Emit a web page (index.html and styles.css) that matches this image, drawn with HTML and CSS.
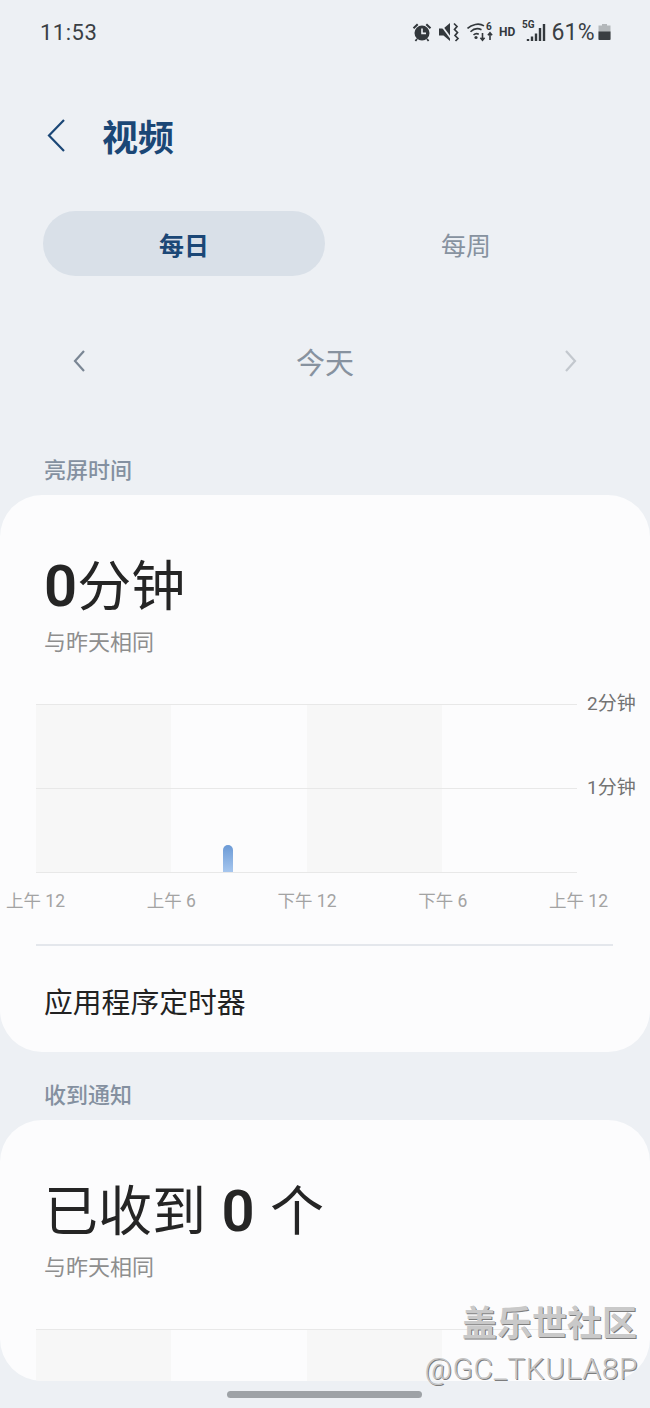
FILE: index.html
```html
<!DOCTYPE html>
<html lang="zh-CN">
<head>
<meta charset="utf-8">
<title>视频</title>
<link rel="stylesheet" href="styles.css">
</head>
<body>
<div class="screen">
  <header class="status">
    <span class="clock">11:53</span>
    <div class="status-icons">
      <svg class="ic" width="20" height="20" viewBox="0 0 20 20"><circle cx="10" cy="11" r="7.500" fill="#33383c"/><path d="M0.800 5.600 5 1.600 6.400 3 2.200 7zM19.200 5.600 15 1.600 13.600 3 17.800 7z" fill="#33383c"/><path d="M10 6.500v4.900h4" fill="none" stroke="#edf0f4" stroke-width="1.600"/><path d="M5 17l-1.600 2M15 17l1.600 2" stroke="#33383c" stroke-width="1.800"/></svg>
      <svg class="ic ic-mute" width="21" height="20" viewBox="0 0 21 20"><path d="M0 6.500h4.500L11 1v18l-6.500-5.500H0z" fill="#33383c"/><path d="M1 1.500l12.500 17" stroke="#edf0f4" stroke-width="1.700"/><path d="M15 1.500l3 3-2.500 3 3 3-2.500 3 3 3-2.500 2.500" fill="none" stroke="#33383c" stroke-width="1.700"/></svg>
      <svg class="ic ic-wifi" width="27" height="22" viewBox="0 0 27 22"><g fill="none" stroke="#33383c" stroke-width="1.600"><path d="M0.500 7.500C4.400 3.400 12 1.600 17 4.800"/><path d="M3.500 10.800C6.600 7.800 11 7 14.500 8.800"/><path d="M6.500 14C8 12.600 10 12.400 11.800 13.200"/><path d="M15.500 12v7M13.400 16.800l2.100 2.400 2.100-2.400M23 19v-7M20.900 14.200l2.100-2.400 2.100 2.400"/></g><circle cx="9" cy="16.500" r="1.600" fill="#33383c"/><text x="19" y="9" class="tiny">6</text></svg>
      <span class="hd">HD</span>
      <svg class="ic ic-signal" width="24" height="24" viewBox="0 0 24 24"><text x="0" y="8" class="tiny">5G</text><path d="M6 21v-2M10 21v-4.500M14 21v-7.500M18 21V8M22 21V4" stroke="#33383c" stroke-width="2.400" fill="none"/></svg>
      <span class="pct">61%</span>
      <svg class="ic" width="13" height="20" viewBox="0 0 13 20"><path d="M4 2h5v1.500h3.500V18H.5V3.500H4z" fill="#b3b7ba"/><path d="M.5 9.500h12V17a1 1 0 0 1-1 1h-10a1 1 0 0 1-1-1z" fill="#3a3e42"/></svg>
    </div>
  </header>

  <nav class="titlebar">
    <svg class="back" width="20" height="36" viewBox="0 0 20 36"><path d="M18 2 3 17.500 18 33" fill="none" stroke="#1b4776" stroke-width="2.200"/></svg>
    <h1 class="title">视频</h1>
  </nav>

  <div class="tabs">
    <div class="tab tab-on">每日</div>
    <div class="tab">每周</div>
  </div>

  <div class="datebar">
    <svg width="14" height="24" viewBox="0 0 14 24"><path d="M12 2 3 12l9 10" fill="none" stroke="#7a8694" stroke-width="2.200"/></svg>
    <span class="date">今天</span>
    <svg width="14" height="24" viewBox="0 0 14 24"><path d="M2 2l9 10-9 10" fill="none" stroke="#c3c8ce" stroke-width="2.200"/></svg>
  </div>

  <h2 class="section">亮屏时间</h2>
  <section class="card">
    <div class="big"><b>0</b>分钟</div>
    <p class="sub">与昨天相同</p>
    <div class="chart">
      <div class="plot">
        <div class="band"></div><div class="band band-w"><span class="bar"></span></div><div class="band"></div><div class="band band-w"></div>
        <i class="line line-1"></i>
      </div>
      <span class="ylabel y2">2分钟</span>
      <span class="ylabel y1">1分钟</span>
    </div>
    <div class="xaxis">
      <span>上午 12</span><span>上午 6</span><span>下午 12</span><span>下午 6</span><span>上午 12</span>
    </div>
    <hr class="divider">
    <div class="timer">应用程序定时器</div>
  </section>

  <h2 class="section section-2">收到通知</h2>
  <section class="card card-2">
    <div class="big">已收到 <b>0</b> 个</div>
    <p class="sub">与昨天相同</p>
    <div class="chart">
      <div class="plot">
        <div class="band"></div><div class="band band-w"></div><div class="band"></div><div class="band band-w"></div>
      </div>
    </div>
  </section>

  <div class="watermark"><span class="wm-1">盖乐世社区</span><span class="wm-2">@GC_TKULA8P</span></div>
  <div class="home"></div>
</div>
</body>
</html>
```
FILE: styles.css
```css
* { box-sizing: border-box; }
html, body { margin: 0; padding: 0; }
body { font-family: "Roboto", "Noto Sans CJK SC", sans-serif; background: #edf0f4; }
.screen { position: relative; width: 650px; height: 1408px; overflow: hidden; background: #edf0f4; }

.status { display: flex; align-items: center; justify-content: space-between; height: 64px; padding: 0 39px 0 40px; }
.clock { font-size: 22px; color: #3a3f44; letter-spacing: .5px; }
.status-icons { display: flex; align-items: center; }
.ic { display: block; flex: none; }
.ic-mute { margin-left: 7px; }
.ic-wifi { margin-left: 7px; }
.tiny { font: 700 10px "Roboto", sans-serif; fill: #33383c; }
.hd { font-size: 12px; font-weight: 700; color: #33383c; margin-left: 5px; }
.ic-signal { margin-left: 7px; }
.pct { font-size: 23px; color: #3a3f44; margin-left: 5px; letter-spacing: .3px; }
.pct + .ic { margin-left: 3px; }

.titlebar { display: flex; align-items: center; height: 36px; margin-top: 57px; padding-left: 46px; gap: 36px; }
.back { display: block; flex: none; margin-bottom: 6px; }
.title { margin: 0; font-size: 36px; line-height: 36px; font-weight: 700; color: #1b4776; }

.tabs { display: flex; margin: 54px 43px 0; height: 65px; }
.tab { flex: 0 0 282px; display: flex; align-items: center; justify-content: center; border-radius: 33px; font-size: 25px; color: #87929f; }
.tab-on { background: #d9e0e8; color: #1b4776; font-weight: 700; }

.datebar { display: flex; align-items: center; justify-content: space-between; margin: 61px 0 0; height: 48px; padding: 0 72px 0 72px; }
.date { font-size: 29px; color: #87929f; }

.section { margin: 72px 0 0; padding-left: 44px; height: 38px; font-size: 22px; line-height: 28px; font-weight: 500; color: #8490a0; }
.section-2 { margin-top: 30px; }

.card { background: #fcfcfd; border-radius: 42px; height: 557px; padding-top: 60px; overflow: hidden; }
.card-2 { height: 261px; }

.big { padding-left: 44px; height: 62px; font-size: 54px; line-height: 62px; color: #252525; word-spacing: 2px; }
.big b { font-size: 58px; font-weight: 600; }
.sub { margin: 12px 0 0 44px; font-size: 22px; line-height: 28px; color: #8e8e8e; }

.chart { position: relative; margin-top: 47px; height: 169px; }
.plot { position: relative; display: flex; margin-left: 36px; width: 541px; height: 169px; border-top: 1px solid #e8e8e8; border-bottom: 1px solid #e8e8e8; }
.band { flex: 1 1 25%; background: #f7f7f7; }
.band-w { position: relative; background: transparent; }
.bar { position: absolute; left: 52px; bottom: 0; width: 10px; height: 27px; border-radius: 5px 5px 0 0; background: linear-gradient(#6b9ad6, #a6c6ee); }
.line { position: absolute; left: 0; right: 0; height: 1px; background: #e8e8e8; }
.line-1 { top: 83px; }
.ylabel { position: absolute; left: 587px; font-size: 19px; line-height: 24px; color: #737373; }
.y2 { top: -12px; }
.y1 { top: 72px; }

.xaxis { position: relative; height: 71px; display: flex; justify-content: space-between; padding: 16px 42px 0 6px; font-size: 17.500px; line-height: 24px; color: #a3a3a3; }

.divider { margin: 0 37px 0 36px; border: 0; height: 2px; background: #e4e7ec; }
.timer { padding: 42px 0 0 44px; font-size: 28.800px; line-height: 30px; color: #222; }

.watermark { position: absolute; right: 13px; top: 1304px; display: flex; flex-direction: column; align-items: flex-end; }
.wm-1 { font-size: 35px; line-height: 42px; font-weight: 700; color: #c9c9c9; text-shadow: 1px 1px 0 #7d7d7d; }
.wm-2 { margin-top: 4px; margin-right: -1px; font-size: 30px; line-height: 38px; font-weight: 300; color: #c4c4c4; text-shadow: 1px 1px 0 #7d7d7d; letter-spacing: 0.6px; }

.home { position: absolute; left: 227px; top: 1391px; width: 195px; height: 7px; border-radius: 4px; background: #9ea2a6; }
```
